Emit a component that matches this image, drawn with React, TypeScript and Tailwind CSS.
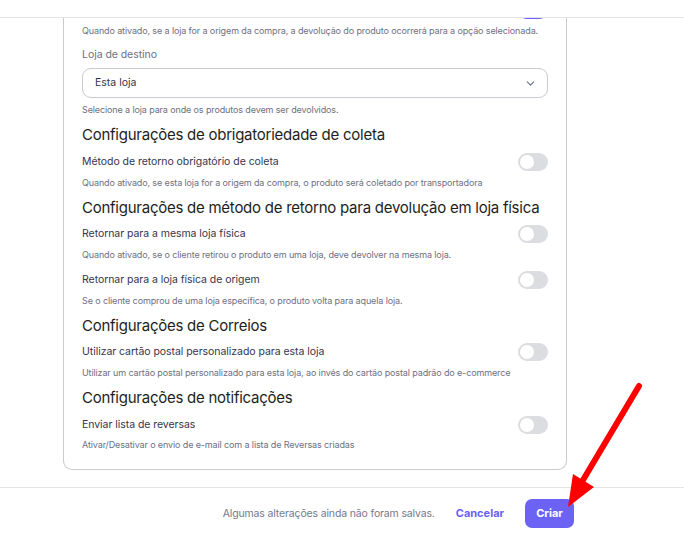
import { ChevronDown } from "lucide-react";

const Toggle = ({ on = false }: { on?: boolean }) => (
  <div
    className={`relative h-[18px] w-[30px] shrink-0 rounded-full ${on ? "bg-[#6c5ff5]" : "bg-[#dcdde1]"}`}
  >
    <div
      className={`absolute top-[2px] h-[14px] w-[14px] rounded-full bg-white ${on ? "left-[14px]" : "left-[2px]"}`}
    />
  </div>
);

const Desc = ({ children, mt }: { children: string; mt: string }) => (
  <p className={`${mt} whitespace-nowrap text-[9px] leading-[14px] tracking-[-0.12px] text-[#6d7081]`}>{children}</p>
);

const SwitchRow = ({
  label,
  desc,
  on = false,
  mt,
  descMt = "mt-[5px]",
}: {
  label: string;
  desc: string;
  on?: boolean;
  mt: string;
  descMt?: string;
}) => (
  <div className={mt}>
    <div className="flex h-[18px] items-center justify-between">
      <span className="text-[10.5px] tracking-[-0.05px] text-[#36344d]">{label}</span>
      <Toggle on={on} />
    </div>
    <Desc mt={descMt}>{desc}</Desc>
  </div>
);

const Heading = ({ children, mt }: { children: string; mt: string }) => (
  <h2 className={`${mt} whitespace-nowrap text-[15px] leading-[22px] tracking-[-0.25px] text-[#1d1e20]`}>{children}</h2>
);

export default function App() {
  return (
    <div className="relative flex h-[539px] w-[684px] flex-col overflow-hidden bg-white font-['Inter',sans-serif]">
      <div className="h-[18px] shrink-0 border-b border-[#e3e4e8]" />

      <main className="flex-1 overflow-hidden">
        <div className="ml-[63px] mt-[-18px] w-[504px] rounded-b-[9px] border border-t-0 border-[#c8cad0] px-[18px] pb-[17px]">
          <div className="flex h-[19px] items-end justify-end">
            <Toggle on />
          </div>

          <Desc mt="mt-[5px]">
            Quando ativado, se a loja for a origem da compra, a devolução do produto ocorrerá para a opção selecionada.
          </Desc>

          <label className="mt-[9px] block text-[10.5px] leading-[16px] tracking-[-0.05px] text-[#6d7081]">Loja de destino</label>
          <div className="mt-[5px] flex h-[30px] items-center justify-between rounded-[9px] border border-[#c8cad0] pl-[12px] pr-[10px]">
            <span className="text-[10.5px] text-[#36344d]">Esta loja</span>
            <ChevronDown size={13} strokeWidth={2} className="text-[#6d7081]" />
          </div>
          <Desc mt="mt-[5px]">Selecione a loja para onde os produtos devem ser devolvidos.</Desc>

          <Heading mt="mt-[7px]">Configurações de obrigatoriedade de coleta</Heading>
          <SwitchRow
            mt="mt-[7px]"
            label="Método de retorno obrigatório de coleta"
            desc="Quando ativado, se esta loja for a origem da compra, o produto será coletado por transportadora"
          />

          <Heading mt="mt-[7px]">Configurações de método de retorno para devolução em loja física</Heading>
          <SwitchRow
            mt="mt-[6px]"
            label="Retornar para a mesma loja física"
            desc="Quando ativado, se o cliente retirou o produto em uma loja, deve devolver na mesma loja."
          />
          <SwitchRow
            mt="mt-[9px]"
            label="Retornar para a loja física de origem"
            desc="Se o cliente comprou de uma loja específica, o produto volta para aquela loja."
          />

          <Heading mt="mt-[7px]">Configurações de Correios</Heading>
          <SwitchRow
            mt="mt-[6px]"
            label="Utilizar cartão postal personalizado para esta loja"
            desc="Utilizar um cartão postal personalizado para esta loja, ao invés do cartão postal padrão do e-commerce"
          />

          <Heading mt="mt-[7px]">Configurações de notificações</Heading>
          <SwitchRow
            mt="mt-[7px]"
            descMt="mt-[4px]"
            label="Enviar lista de reversas"
            desc="Ativar/Desativar o envio de e-mail com a lista de Reversas criadas"
          />
        </div>
      </main>

      <footer className="flex h-[52px] shrink-0 items-center justify-end gap-[21px] border-t border-[#e3e4e8] pr-[110px]">
        <span className="text-[10.5px] tracking-[-0.15px] text-[#77798a]">Algumas alterações ainda não foram salvas.</span>
        <button className="text-[11px] font-bold text-[#6c5ff5]">Cancelar</button>
        <button className="h-[29px] w-[49px] rounded-[7px] bg-[#6c63f5] text-[11px] font-bold text-white">Criar</button>
      </footer>

      <svg className="pointer-events-none absolute inset-0" width="684" height="539">
        <line x1="639" y1="386" x2="583" y2="480" stroke="#ff0000" strokeWidth="6" strokeLinecap="round" />
        <polygon points="573,474 594,487 568,507" fill="#ff0000" />
      </svg>
    </div>
  );
}
